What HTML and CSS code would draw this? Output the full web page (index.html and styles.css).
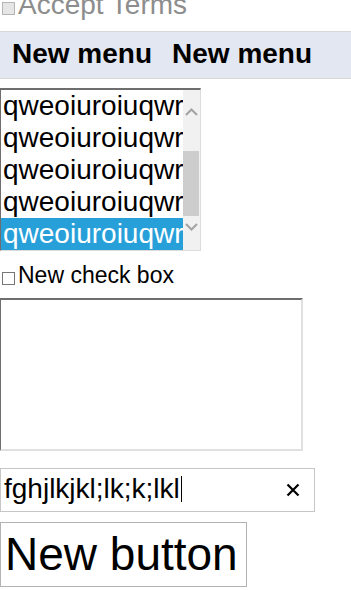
FILE: index.html
```html
<!DOCTYPE html>
<html lang="en">

<head>
    <meta charset="UTF-8">
    <meta name="viewport" content="width=device-width, initial-scale=1.0">
    <title>Controls</title>
    <link rel="stylesheet" href="styles.css">
</head>

<body>
    <label class="terms">
        <input type="checkbox" class="check check-disabled" disabled>
        <span>Accept Terms</span>
    </label>

    <div class="menu-bar">
        <div class="menu-item">New menu</div>
        <div class="menu-item">New menu</div>
    </div>

    <div class="listbox">
        <div class="list-rows">
            <div class="list-row">qweoiuroiuqwr</div>
            <div class="list-row">qweoiuroiuqwr</div>
            <div class="list-row">qweoiuroiuqwr</div>
            <div class="list-row">qweoiuroiuqwr</div>
            <div class="list-row selected">qweoiuroiuqwr</div>
        </div>
        <div class="scrollbar">
            <div class="sb-btn sb-up">
                <svg width="13" height="8" viewBox="0 0 13 8"><path d="M1 7 L6.5 1.5 L12 7" fill="none" stroke="#a3a3a3" stroke-width="2"/></svg>
            </div>
            <div class="sb-track">
                <div class="sb-thumb"></div>
            </div>
            <div class="sb-btn sb-down">
                <svg width="13" height="8" viewBox="0 0 13 8"><path d="M1 1 L6.5 6.5 L12 1" fill="none" stroke="#a3a3a3" stroke-width="2"/></svg>
            </div>
        </div>
    </div>

    <label class="check-row">
        <input type="checkbox" class="check">
        <span>New check box</span>
    </label>

    <textarea class="text-area"></textarea>

    <div class="search-box">
        <span class="search-text">fghjlkjkl;lk;k;lkl</span><span class="caret"></span>
        <span class="clear">
            <svg width="14" height="14" viewBox="0 0 14 14"><path d="M1.5 1.5 L12.5 12.5 M12.5 1.5 L1.5 12.5" stroke="#000" stroke-width="2.2"/></svg>
        </span>
    </div>

    <button class="big-button">New button</button>
</body>

</html>
```

FILE: styles.css
```css
body {
    margin: 0;
    font-family: "Liberation Sans", Arial, sans-serif;
    background-color: #fff;
    color: #000;
}

.check {
    appearance: none;
    width: 13px;
    height: 13px;
    margin: 0;
    border: 1px solid #767676;
    background-color: #fff;
    box-sizing: border-box;
    flex-shrink: 0;
}

.check-disabled {
    border-color: #b5b5b5;
    background-color: #e6e6e6;
}

.terms {
    display: flex;
    align-items: flex-start;
    margin-top: -11px;
    font-size: 28px;
    color: #8d8d8d;
}

.terms .check {
    margin: 13px 3px 0 2px;
}

.menu-bar {
    display: flex;
    margin-top: 10px;
    padding: 6px 0 8px;
    background-color: #e3e7f2;
    border-top: 1px solid #d8d8d8;
    border-bottom: 1px solid #d8d8d8;
    font-size: 28px;
    font-weight: bold;
}

.menu-item {
    padding: 0 8px 0 12px;
}

.listbox {
    display: flex;
    width: 201px;
    margin-top: 9px;
    border-top: 2px solid #6e6e6e;
    border-left: 1px solid #6e6e6e;
    border-right: 1px solid #dcdcdc;
    border-bottom: 1px solid #dcdcdc;
    box-sizing: border-box;
    font-size: 28px;
}

.list-rows {
    flex: 1;
    overflow: hidden;
}

.list-row {
    height: 32px;
    line-height: 32px;
    padding-left: 2px;
    white-space: nowrap;
}

.list-row.selected {
    background-color: #27a0da;
    color: #fff;
}

.scrollbar {
    display: flex;
    flex-direction: column;
    width: 17px;
    height: 160px;
    background-color: #f1f1f1;
}

.sb-btn {
    display: flex;
    justify-content: center;
    align-items: center;
}

.sb-up {
    height: 44px;
}

.sb-track {
    flex: 1;
}

.sb-thumb {
    height: 65px;
    margin: 17px 1px 0 0;
    background-color: #cdcdcd;
}

.sb-down {
    height: 34px;
    padding-bottom: 12px;
    box-sizing: border-box;
}

.check-row {
    display: flex;
    align-items: flex-start;
    margin-top: 11px;
    font-size: 23px;
}

.check-row .check {
    margin: 10px 3px 0 2px;
}

.text-area {
    display: block;
    width: 303px;
    height: 153px;
    margin: 9px 0 0;
    padding: 0;
    border-top: 2px solid #6e6e6e;
    border-left: 1px solid #6e6e6e;
    border-right: 2px solid #e0e0e0;
    border-bottom: 2px solid #e0e0e0;
    box-sizing: border-box;
    resize: none;
}

.search-box {
    display: flex;
    align-items: center;
    width: 315px;
    height: 44px;
    margin-top: 17px;
    padding: 0 0 2px 3px;
    border: 1px solid #c6c6c6;
    box-sizing: border-box;
    font-size: 28px;
}

.caret {
    width: 1px;
    height: 26px;
    margin-left: 1px;
    background-color: #000;
}

.clear {
    display: flex;
    margin-left: auto;
    margin-right: 14px;
    margin-top: 2px;
}

.big-button {
    display: block;
    margin-top: 10px;
    padding: 4px 8px 5px 4px;
    background-color: #fff;
    border: 1px solid #b3b3b3;
    border-radius: 0;
    font-family: "Liberation Sans", Arial, sans-serif;
    font-size: 46px;
    color: #000;
}
```
